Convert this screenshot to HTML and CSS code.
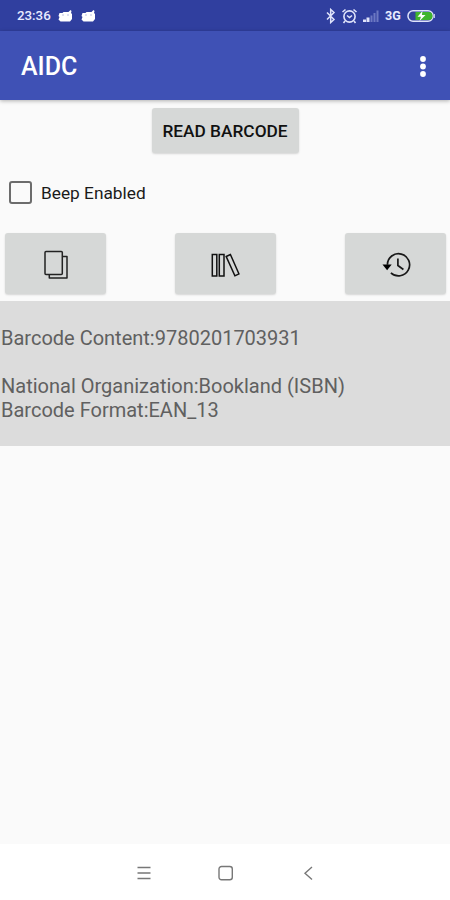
FILE: index.html
```
<!DOCTYPE html>
<html lang="en">
<head>
<meta charset="UTF-8">
<meta name="viewport" content="width=device-width, initial-scale=1.0">
<title>AIDC</title>
<link rel="stylesheet" href="styles.css">
</head>
<body>
  <div class="status-bar">
    <span class="time">23:36</span>
    <svg class="notif" width="16" height="14" viewBox="0 0 16 14"><path d="M1.500 4h3l1-1h5l2-2 1 1-.5 2 1 1v5l-2 2.500H2.500L.5 10.500 1.500 8l-1-1z" fill="#fff"/><path d="M4.500 6h1M9.500 6h1" stroke="#7984c6"/></svg>
    <svg class="notif" width="16" height="14" viewBox="0 0 16 14"><path d="M1.500 4h3l1-1h5l2-2 1 1-.5 2 1 1v5l-2 2.500H2.500L.5 10.500 1.500 8l-1-1z" fill="#fff"/><path d="M4.500 6h1M9.500 6h1" stroke="#7984c6"/></svg>
    <div class="status-icons">
      <svg width="10" height="16" viewBox="0 0 10 16"><path d="M1 4.500l7 7-3.300 3V1.500l3.300 3-7 7" fill="none" stroke="#dfe3fa" stroke-width="1.500"/></svg>
      <svg class="alarm" width="16" height="16" viewBox="0 0 16 16"><g fill="none" stroke="#dfe3fa" stroke-width="1.600"><circle cx="7.500" cy="8.500" r="5.600"/><path d="M.5 4l3-2.500M14.500 4l-3-2.500M5 7.500l2.500 2 2.500-2M3 13l-1.500 2M12 13l1.500 2"/></g></svg>
      <svg class="signal" width="17" height="14" viewBox="0 0 17 14"><path d="M0 13v-2.500h3V13zM3.500 13V8.500h3V13z" fill="#dfe3fa"/><path d="M7.500 13V6.500h2V13zM10.500 13V4h2v9zM13.500 13V1.500h2V13z" fill="#6c78c2"/></svg>
      <span class="network">3G</span>
      <svg class="battery" width="29" height="14" viewBox="0 0 29 14"><rect x="1" y="1.700" width="25" height="10.600" rx="5" fill="#33429c" stroke="#dfe3fa" stroke-width="1.500"/><path d="M8.500 3h13a4 4 0 0 1 0 8h-13z" fill="#3fb52c"/><path d="M15.500 2l-5 5.700h3.500L12.500 12l6-6h-3.600z" fill="#fff"/><path d="M27.300 5v4" stroke="#dfe3fa"/></svg>
    </div>
  </div>

  <div class="app-bar">
    <h1>AIDC</h1>
    <svg width="8" height="24" viewBox="0 0 8 24"><g fill="#fff"><circle cx="4" cy="4" r="2.900"/><circle cx="4" cy="11.500" r="2.900"/><circle cx="4" cy="19" r="2.900"/></g></svg>
  </div>

  <main class="content">
    <button class="btn read-btn">READ BARCODE</button>

    <label class="beep">
      <input type="checkbox">
      <span>Beep Enabled</span>
    </label>

    <div class="actions">
      <button class="btn icon-btn" aria-label="Copy">
        <svg width="32" height="32" viewBox="0 0 32 32"><g fill="none" stroke="#222" stroke-width="1.500" stroke-linejoin="round"><rect x="5" y="3.500" width="17.300" height="23" rx="1"/><path d="M22.300 8.500h4.700v21.500H9.300v-3.500"/></g></svg>
      </button>
      <button class="btn icon-btn" aria-label="Library">
        <svg width="32" height="32" viewBox="0 0 32 32"><g fill="none" stroke="#111" stroke-width="1.500"><path d="M2.300 6.500h4.500v21.500H2.300zM9.300 6.500h4.700v21.500H9.300zM16.200 8.500l4.200-2 8.500 19.300-4 2z"/></g></svg>
      </button>
      <button class="btn icon-btn" aria-label="History">
        <svg width="32" height="32" viewBox="0 0 32 32"><g fill="none" stroke="#181818" stroke-width="1.700"><path d="M7.400 16.800a11.100 11.100 0 1 1 3.500 8.100"/><path d="M17.900 10.500v7l5.500 4"/></g><path d="M2.500 16.500h9.200l-4.600 5.700z" fill="#000"/></svg>
      </button>
    </div>

    <div class="result">
      <p>Barcode Content:9780201703931</p>
      <br>
      <p>National Organization:Bookland (ISBN)</p>
      <p>Barcode Format:EAN_13</p>
    </div>
  </main>

  <div class="nav-bar">
    <svg width="16" height="16" viewBox="0 0 16 16"><path d="M1.500 2.500h13M1.500 8h13M1.500 13.500h13" stroke="#777" stroke-width="1.300"/></svg>
    <svg width="16" height="16" viewBox="0 0 16 16"><rect x="1" y="1.500" width="13.300" height="13.300" rx="2.500" fill="none" stroke="#777" stroke-width="1.400"/></svg>
    <svg width="16" height="16" viewBox="0 0 16 16"><path d="M12 2L5 8.200l7 6.200" fill="none" stroke="#777" stroke-width="1.400"/></svg>
  </div>
</body>
</html>
```
FILE: styles.css
```
* {
  box-sizing: border-box;
}

body {
  margin: 0;
  height: 900px;
  display: flex;
  flex-direction: column;
  font-family: Roboto, sans-serif;
  background-color: #fafafa;
  overflow: hidden;
}

svg {
  display: block;
  flex: none;
}

.status-bar {
  height: 31px;
  padding: 0 14px 0 17px;
  display: flex;
  align-items: center;
  background-color: #303f9f;
  color: #e8ebff;
}

.time {
  width: 34px;
  font-size: 13.3px;
  font-weight: 500;
  white-space: nowrap;
}

.notif {
  margin-left: 7px;
}

.status-icons {
  margin-left: auto;
  display: flex;
  align-items: center;
}

.alarm {
  margin-left: 6px;
}

.signal {
  margin-left: 5px;
}

.network {
  margin-left: 5px;
  width: 17px;
  font-size: 12.5px;
  font-weight: 700;
}

.battery {
  margin-left: 5px;
}

.app-bar {
  height: 69px;
  padding: 2px 23px 0 21px;
  display: flex;
  align-items: center;
  justify-content: space-between;
  background-color: #3f51b5;
  color: #fff;
  box-shadow: 0 1px 4px rgba(0, 0, 0, 0.3);
}

.app-bar h1 {
  margin: 0;
  font-size: 25px;
  font-weight: 500;
}

.content {
  flex: 1;
  padding-top: 8px;
  display: flex;
  flex-direction: column;
}

.btn {
  padding: 0;
  border: 0;
  border-radius: 3px;
  background-color: #d6d8d7;
  color: #111;
  font-family: inherit;
  box-shadow: 0 1px 2px rgba(0, 0, 0, 0.15);
}

.read-btn {
  align-self: center;
  width: 147px;
  height: 45px;
  font-size: 17.3px;
  font-weight: 500;
}

.beep {
  margin-top: 28px;
  padding-left: 9px;
  height: 24px;
  display: flex;
  align-items: center;
  font-size: 17.3px;
  color: #1a1a1a;
}

.beep input {
  appearance: none;
  width: 23px;
  height: 23px;
  margin: 0 9px 1px 0;
  border: 2px solid #6c6c6c;
  border-radius: 3px;
}

.actions {
  margin-top: 28px;
  padding: 0 4px 0 5px;
  display: flex;
  justify-content: space-between;
}

.icon-btn {
  width: 101px;
  height: 61px;
  display: flex;
  align-items: center;
  justify-content: center;
}

.result {
  margin-top: 7px;
  height: 145px;
  padding: 25px 1px 0;
  background-color: #dcdcdc;
  color: #606060;
  font-size: 20px;
  line-height: 24px;
}

.result p {
  margin: 0;
}

.nav-bar {
  height: 56px;
  padding: 2px 134px 0 136px;
  display: flex;
  align-items: center;
  justify-content: space-between;
  background-color: #fff;
}
```
